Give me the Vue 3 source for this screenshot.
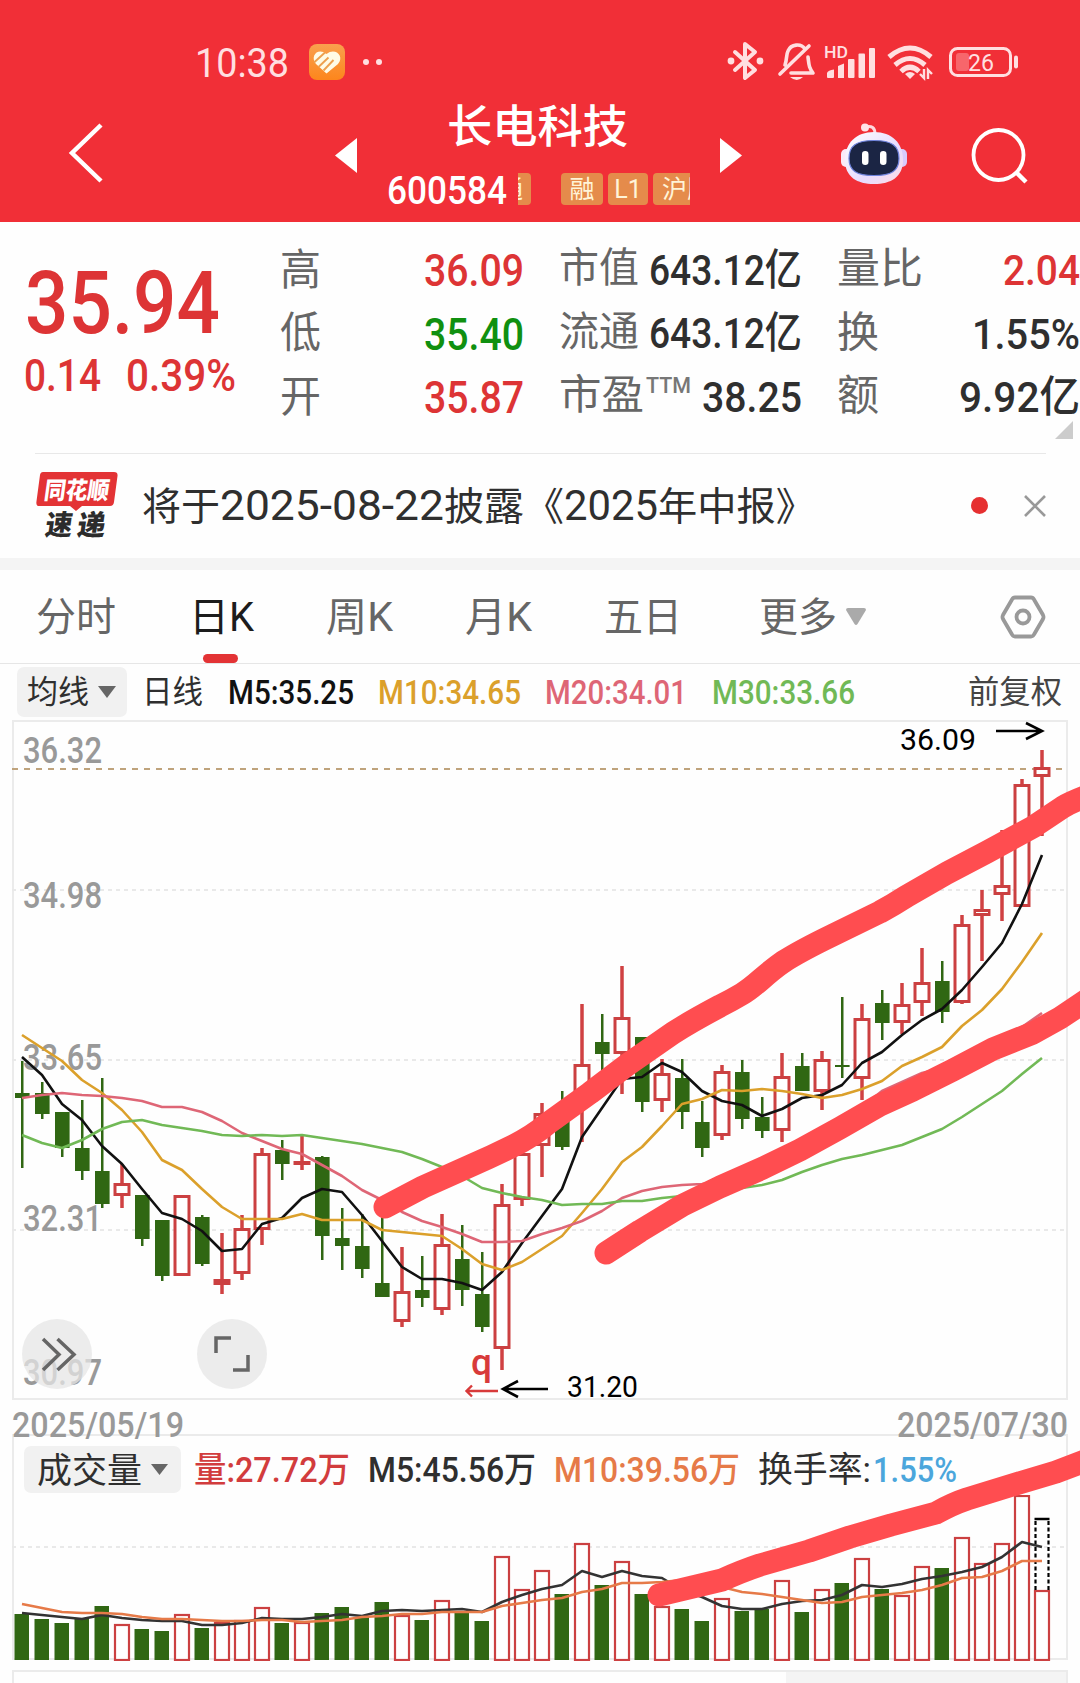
<script setup>
import { h } from 'vue'

// single line of text squeezed to a fixed width, bottom edge = baseline
const FitText = (props) => {
  const height = props.size * 0.88
  return h('svg', { class: 'fit', width: props.w, height }, [
    h('text', {
      x: 0,
      y: height,
      textLength: props.w,
      lengthAdjust: 'spacingAndGlyphs',
      'font-size': props.size,
      fill: 'currentColor'
    }, props.t)
  ])
}
FitText.props = ['t', 'w', 'size']

const ohlc = [
  { label: '高', value: '36.09', cls: 'up' },
  { label: '低', value: '35.40', cls: 'down' },
  { label: '开', value: '35.87', cls: 'up' }
]

const caps = [
  { label: '市值', lw: 80, value: '643.12亿', vw: 153 },
  { label: '流通', lw: 80, value: '643.12亿', vw: 153 },
  { label: '市盈', lw: 85, sup: 'TTM', value: '38.25', vw: 100 }
]

const ratios = [
  { label: '量比', lw: 86, value: '2.04', vw: 77, cls: 'up' },
  { label: '换', lw: 42, value: '1.55%', vw: 108, cls: '' },
  { label: '额', lw: 42, value: '9.92亿', vw: 121, cls: '' }
]

const notice = [
  { text: '将于', w: 78, size: 39 },
  { text: '2025-08-22', w: 224, size: 42 },
  { text: '披露《', w: 120, size: 39 },
  { text: '2025', w: 94, size: 42 },
  { text: '年中报》', w: 157, size: 39 }
]

const tabs = [
  { text: '分时', w: 80 },
  { text: '日K', w: 65, active: true },
  { text: '周K', w: 67 },
  { text: '月K', w: 67 },
  { text: '五日', w: 78 },
  { text: '更多', w: 78, more: true }
]

const mas = [
  { text: 'M5:35.25', w: 126, cls: 'm5' },
  { text: 'M10:34.65', w: 143, cls: 'm10' },
  { text: 'M20:34.01', w: 142, cls: 'm20' },
  { text: 'M30:33.66', w: 143, cls: 'm30' }
]

const axis = [
  { text: '36.32', y: 763 },
  { text: '34.98', y: 908 },
  { text: '33.65', y: 1070 },
  { text: '32.31', y: 1231 },
  { text: '30.97', y: 1385 }
]

// [up, high, low, body top, body bottom]
const candles = [
  [0, 1061, 1168, 1093, 1098], [0, 1082, 1119, 1093, 1114], [0, 1112, 1157, 1112, 1148],
  [0, 1100, 1180, 1148, 1171], [0, 1078, 1208, 1171, 1204], [1, 1164, 1208, 1183, 1196],
  [0, 1195, 1246, 1195, 1239], [0, 1220, 1281, 1220, 1276], [1, 1195, 1276, 1195, 1276],
  [0, 1215, 1266, 1217, 1264], [1, 1233, 1294, 1279, 1285], [1, 1215, 1280, 1228, 1274],
  [1, 1148, 1245, 1153, 1230], [0, 1140, 1180, 1150, 1164], [1, 1136, 1170, 1161, 1165],
  [0, 1156, 1260, 1157, 1236], [0, 1208, 1270, 1238, 1246], [0, 1214, 1278, 1246, 1269],
  [0, 1213, 1297, 1283, 1297], [1, 1247, 1327, 1291, 1322], [0, 1256, 1307, 1290, 1298],
  [1, 1214, 1315, 1244, 1310], [0, 1225, 1306, 1259, 1290], [0, 1252, 1332, 1294, 1327],
  [1, 1184, 1370, 1204, 1349], [1, 1147, 1206, 1153, 1200], [1, 1103, 1177, 1113, 1146],
  [0, 1091, 1150, 1115, 1147], [1, 1004, 1142, 1064, 1092], [0, 1014, 1070, 1042, 1054],
  [1, 966, 1094, 1017, 1054], [0, 1037, 1112, 1037, 1102], [1, 1059, 1112, 1073, 1101],
  [0, 1059, 1129, 1078, 1112], [0, 1101, 1157, 1122, 1148], [1, 1065, 1140, 1071, 1136],
  [0, 1060, 1129, 1072, 1119], [0, 1097, 1138, 1117, 1131], [1, 1053, 1142, 1076, 1131],
  [0, 1053, 1091, 1066, 1091], [1, 1051, 1110, 1059, 1092], [0, 997, 1078, 1065, 1067],
  [1, 1004, 1100, 1018, 1079], [0, 990, 1040, 1003, 1023], [1, 983, 1034, 1004, 1023],
  [1, 948, 1016, 982, 1003], [0, 961, 1023, 981, 1012], [1, 915, 1004, 924, 1003],
  [1, 890, 961, 909, 916], [1, 830, 921, 885, 895], [1, 779, 907, 784, 907],
  [1, 750, 836, 767, 777]
]

const lineM5 = [1057, 1075, 1104, 1120, 1146, 1164, 1189, 1213, 1219, 1231, 1251, 1249, 1224, 1218, 1198, 1189, 1192, 1215, 1241, 1267, 1279, 1279, 1283, 1290, 1272, 1243, 1216, 1189, 1137, 1108, 1079, 1077, 1063, 1072, 1091, 1101, 1105, 1116, 1109, 1098, 1095, 1085, 1063, 1052, 1035, 1020, 1009, 990, 967, 943, 904, 855]
const lineM10 = [1035, 1048, 1061, 1080, 1093, 1110, 1132, 1160, 1170, 1189, 1207, 1219, 1219, 1219, 1214, 1220, 1220, 1220, 1230, 1232, 1234, 1236, 1249, 1264, 1270, 1262, 1249, 1236, 1213, 1189, 1162, 1147, 1126, 1104, 1099, 1090, 1091, 1089, 1091, 1094, 1098, 1095, 1089, 1081, 1066, 1057, 1047, 1026, 1010, 989, 962, 933]
const lineM20 = [1098, 1095, 1093, 1095, 1096, 1098, 1101, 1107, 1107, 1112, 1121, 1133, 1141, 1149, 1154, 1165, 1176, 1190, 1200, 1212, 1221, 1227, 1234, 1242, 1242, 1241, 1234, 1228, 1221, 1211, 1198, 1191, 1187, 1185, 1184, 1181, 1176, 1166, 1154, 1142, 1131, 1120, 1107, 1091, 1082, 1073, 1068, 1058, 1048, 1038, 1027, 1013]
const lineM30 = [1135, 1143, 1148, 1140, 1129, 1122, 1120, 1125, 1128, 1131, 1135, 1136, 1135, 1136, 1135, 1138, 1141, 1144, 1148, 1152, 1159, 1167, 1176, 1188, 1193, 1197, 1200, 1205, 1204, 1204, 1201, 1201, 1198, 1196, 1195, 1191, 1188, 1185, 1180, 1172, 1165, 1159, 1155, 1150, 1145, 1137, 1129, 1117, 1104, 1091, 1074, 1058]

const volTops = [1614, 1619, 1623, 1618, 1606, 1624, 1629, 1631, 1614, 1628, 1622, 1620, 1607, 1623, 1622, 1613, 1607, 1617, 1602, 1615, 1620, 1600, 1613, 1621, 1556, 1589, 1570, 1594, 1543, 1585, 1561, 1594, 1606, 1609, 1621, 1598, 1611, 1609, 1580, 1612, 1589, 1583, 1558, 1589, 1595, 1566, 1568, 1537, 1563, 1543, 1495, 1590]
const volM5 = [1613, 1615, 1617, 1619, 1615, 1618, 1620, 1621, 1621, 1625, 1625, 1623, 1618, 1619, 1619, 1617, 1614, 1616, 1611, 1610, 1611, 1610, 1609, 1612, 1602, 1595, 1589, 1585, 1571, 1577, 1571, 1576, 1578, 1590, 1597, 1606, 1609, 1609, 1604, 1601, 1600, 1595, 1585, 1587, 1584, 1579, 1576, 1572, 1567, 1557, 1542, 1547]
const volM10 = [1604, 1608, 1612, 1613, 1613, 1614, 1617, 1619, 1619, 1620, 1621, 1621, 1620, 1620, 1622, 1621, 1620, 1617, 1616, 1614, 1614, 1612, 1612, 1612, 1606, 1603, 1600, 1598, 1592, 1589, 1583, 1583, 1582, 1580, 1582, 1587, 1592, 1594, 1597, 1600, 1603, 1602, 1597, 1595, 1593, 1590, 1585, 1578, 1577, 1571, 1561, 1561]

const cx = (i) => 22 + i * 20
const points = (list) => list.map((y, i) => `${cx(i)},${y}`).join(' ')
</script>

<template>
  <div class="page">
    <header class="top">
      <div class="status">
        <FitText class="clock" t="10:38" w="94" size="40" />
        <svg class="app-icon" width="36" height="36" viewBox="0 0 36 36">
          <defs>
            <linearGradient id="orange" x1="0" y1="0" x2="0" y2="1">
              <stop offset="0" stop-color="#f9a04e" />
              <stop offset="1" stop-color="#fd861c" />
            </linearGradient>
          </defs>
          <rect width="36" height="36" rx="8" fill="url(#orange)" />
          <path d="M17.500 29.500 L7 20 C0.500 12 9 3 17.500 10 C26 3 36 12 29 20z" fill="#fffbe6" />
          <path d="M5 18.500 L16 8.500 M9.500 23 L19.500 13.500 M14.500 26.500 L24.500 16" stroke="#eda04e" stroke-width="1.900" />
        </svg>
        <i class="dot"></i><i class="dot"></i>

        <svg class="status-icons" width="292" height="42" viewBox="0 0 292 42">
          <g fill="none" stroke="#ffdfe0" stroke-width="4" stroke-linejoin="round" stroke-linecap="round">
            <path d="M8 12 L28 30 L18 38 V4 L28 12 L8 30" />
            <path d="M58 25 C60 20 59 15 61 11 C64 4 74 3 78 9 M81 17 C82 25 82 28 86 33 H64 M53 34 L82 6" stroke-width="3.600" />
          </g>
          <circle cx="4" cy="21" r="3.400" fill="#ffdfe0" />
          <circle cx="33" cy="21" r="3.400" fill="#ffdfe0" />
          <path d="M63 37 H76 Q70 43 63 37" fill="#ffdfe0" />
          <text x="97" y="18" font-size="16.500" font-weight="500" fill="#ffdfe0" textLength="24" lengthAdjust="spacingAndGlyphs">HD</text>
          <g fill="#ffdfe0">
            <path d="M100 33 Q101 30 107 29.500 V37 Q107 38 106 38 H101 Q100 38 100 37z" />
            <path d="M111 26 L117 23.500 V38 H111z" />
            <rect x="121" y="19" width="6.500" height="19" rx="1" />
            <rect x="131.500" y="13.500" width="6.500" height="24.500" rx="1" />
            <rect x="142" y="8" width="6" height="30" rx="1" />
          </g>
          <g fill="none" stroke="#ffdfe0" stroke-width="5">
            <path d="M162 17 Q183 -1 204 17" />
            <path d="M168 25 Q183 12 198 25" />
            <path d="M174 31.500 Q183 23 192 31.500" />
          </g>
          <path d="M178 34 Q183 30 188 34 L183 39z" fill="#ffdfe0" />
          <path d="M197 29 V38 L193 34 M201 39 V30 L205 34" fill="none" stroke="#ffdfe0" stroke-width="2.400" />
          <rect x="223.500" y="8.500" width="60" height="27" rx="7" fill="none" stroke="#ffdfe0" stroke-width="3" />
          <rect x="229" y="13" width="13" height="18" rx="3" fill="#f7666b" />
          <text x="241" y="31" font-size="24" fill="#ffdfe0" textLength="26" lengthAdjust="spacingAndGlyphs">26</text>
          <path d="M289 17.500 V26.500" stroke="#ffdfe0" stroke-width="4" stroke-linecap="round" />
        </svg>
      </div>

      <div class="nav">
        <svg class="back" width="36" height="62" viewBox="0 0 36 62">
          <path d="M33 3 L4 31 L33 59" fill="none" stroke="#fff" stroke-width="4.500" />
        </svg>
        <svg class="prev" width="22" height="35"><path d="M22 0 V35 L0 17.500z" fill="#fff" /></svg>
        <div class="stock">
          <FitText class="name-cn" t="长电科技" w="181" size="45" />
          <div class="codes">
            <FitText class="code" t="600584" w="120" size="39" />
            <span class="tag cut-left">通</span>
            <span class="tag rong">融</span>
            <span class="tag l1">L1</span>
            <span class="tag cut-right">沪股</span>
          </div>
        </div>
        <svg class="next" width="22" height="35"><path d="M0 0 V35 L22 17.500z" fill="#fff" /></svg>
        <svg class="robot" width="68" height="64" viewBox="0 0 68 64">
          <defs>
            <linearGradient id="shell" x1="0" y1="0" x2="1" y2="1">
              <stop offset="0" stop-color="#fff" />
              <stop offset="0.600" stop-color="#e6dcff" />
              <stop offset="1" stop-color="#ffdce4" />
            </linearGradient>
          </defs>
          <path d="M24 4 C31 2 34 5 34 11" fill="none" stroke="#ffd9de" stroke-width="3" />
          <circle cx="24" cy="4.500" r="4" fill="#ffe4e8" />
          <rect x="0" y="26" width="12" height="18" rx="5" fill="#fbe9f8" />
          <rect x="54" y="26" width="12" height="18" rx="5" fill="#d9cbfc" />
          <path d="M33 9 C51 9 62 20 62 37 C62 54 50 61 33 61 C16 61 4 54 4 37 C4 20 15 9 33 9z" fill="url(#shell)" />
          <path d="M33 17.500 C51 17.500 58 23 58 35.500 C58 48 50 52.500 33 52.500 C16 52.500 8 48 8 35.500 C8 23 15 17.500 33 17.500z" fill="#1b2544" stroke="#6e83dc" stroke-width="1.200" />
          <rect x="21" y="28" width="6.500" height="14" rx="3.200" fill="#fff" />
          <rect x="39" y="28" width="6.500" height="14" rx="3.200" fill="#fff" />
        </svg>
        <svg class="search" width="58" height="58" viewBox="0 0 58 58">
          <circle cx="27.500" cy="28" r="25" fill="none" stroke="#fff" stroke-width="3.800" />
          <path d="M45 45 L55 55" stroke="#fff" stroke-width="4.500" />
        </svg>
      </div>
    </header>

    <section class="quote">
      <div class="price up">
        <FitText class="last" t="35.94" w="195" size="88" />
        <div class="change">
          <FitText t="0.14" w="77" size="43.500" />
          <FitText t="0.39%" w="110" size="43.500" />
        </div>
      </div>
      <div class="col ohlc">
        <div v-for="o in ohlc" :key="o.label" class="pair">
          <FitText class="label" :t="o.label" w="41" size="43" />
          <FitText :class="['num', o.cls]" :t="o.value" w="100" size="43.500" />
        </div>
      </div>
      <div class="col caps">
        <div v-for="c in caps" :key="c.label" class="pair">
          <div class="name">
            <FitText class="label" :t="c.label" :w="c.lw" size="41" />
            <FitText v-if="c.sup" class="sup" :t="c.sup" w="45" size="22" />
          </div>
          <FitText class="num" :t="c.value" :w="c.vw" size="43" />
        </div>
      </div>
      <div class="col ratios">
        <div v-for="r in ratios" :key="r.label" class="pair">
          <FitText class="label" :t="r.label" :w="r.lw" size="42" />
          <FitText :class="['num', r.cls]" :t="r.value" :w="r.vw" size="43" />
        </div>
      </div>
      <i class="corner"></i>
    </section>

    <section class="notice">
      <svg class="logo" width="82" height="68" viewBox="0 0 82 68">
        <path d="M7 0 H78 Q82 0 81.500 4 L78 30 Q77.500 34 74 34 H46 L40 39 L34 34 H3 Q0 34 0.400 30 L4 3 Q4.500 0 7 0z" fill="#e33335" />
        <g transform="skewX(-8)" class="logo-text">
          <text x="11" y="27" font-size="24" fill="#fff" textLength="65" lengthAdjust="spacingAndGlyphs">同花顺</text>
          <text x="17" y="63" font-size="28" fill="#2c2c2c" textLength="27" lengthAdjust="spacingAndGlyphs">速</text>
          <text x="49" y="63" font-size="28" fill="#2c2c2c" textLength="28" lengthAdjust="spacingAndGlyphs">递</text>
        </g>
      </svg>
      <div class="notice-text">
        <FitText v-for="n in notice" :key="n.text" :t="n.text" :w="n.w" :size="n.size" />
      </div>
      <i class="red-dot"></i>
      <svg class="close" width="22" height="22"><path d="M1 1 L21 21 M21 1 L1 21" stroke="#999" stroke-width="2.600" /></svg>
    </section>

    <nav class="tabs">
      <div v-for="t in tabs" :key="t.text" :class="['tab', { active: t.active }]">
        <FitText :t="t.text" :w="t.w" size="40" />
        <svg v-if="t.more" class="more" width="20" height="18"><path d="M0 2 Q0 0 2 0 H18 Q20 0 20 2 L11.500 16 Q10 18 8.500 16z" fill="#aaa" /></svg>
      </div>
      <svg class="gear" width="46" height="44" viewBox="0 0 46 44">
        <path d="M15 2.500 H31 Q33 2.500 34 4.500 L43 20 Q44 22 43 24 L34 39.500 Q33 41.500 31 41.500 H15 Q13 41.500 12 39.500 L3 24 Q2 22 3 20 L12 4.500 Q13 2.500 15 2.500z" fill="none" stroke="#999" stroke-width="3.800" />
        <circle cx="23" cy="22" r="6.500" fill="none" stroke="#999" stroke-width="3.800" />
      </svg>
    </nav>

    <div class="legend">
      <span class="picker">
        <FitText t="均线" w="62" size="32" />
        <svg width="18" height="12"><path d="M0 0 H18 L9 12z" fill="#666" /></svg>
      </span>
      <FitText class="period" t="日线" w="61" size="32" />
      <FitText v-for="m in mas" :key="m.text" :class="['ma', m.cls]" :t="m.text" :w="m.w" size="33" />
      <FitText class="adjust" t="前复权" w="94" size="32" />
    </div>

    <svg class="kline" width="1080" height="680" viewBox="0 720 1080 680">
      <rect x="13" y="721" width="1054" height="678" fill="none" stroke="#ebebeb" stroke-width="2" />
      <path d="M12 890 H1066 M12 1060 H1066 M12 1230 H1066" stroke="#e9e9e9" stroke-width="2" stroke-dasharray="4 4" />
      <path d="M12 769 H1066" stroke="#bfa37c" stroke-width="2" stroke-dasharray="6 6" />
      <g class="axis">
        <text v-for="a in axis" :key="a.text" x="23" :y="a.y" textLength="79" lengthAdjust="spacingAndGlyphs">{{ a.text }}</text>
      </g>
      <template v-for="(c, i) in candles" :key="i">
        <g v-if="c[0]" class="rise">
          <path :d="`M${cx(i)} ${c[1]} V${c[3]} M${cx(i)} ${c[4]} V${c[2]}`" />
          <rect :x="cx(i) - 7" :y="c[3] + 1.5" width="14" :height="Math.max(c[4] - c[3] - 3, 1)" />
        </g>
        <g v-else class="fall">
          <rect :x="cx(i) - 1" :y="c[1]" width="2.500" :height="c[2] - c[1]" />
          <rect :x="cx(i) - 7" :y="c[3]" width="14.600" :height="c[4] - c[3]" />
        </g>
      </template>
      <g class="lines">
        <polyline :points="points(lineM5)" stroke="#111" />
        <polyline :points="points(lineM10)" stroke="#dba02b" />
        <polyline :points="points(lineM20)" stroke="#de6676" />
        <polyline :points="points(lineM30)" stroke="#71b956" />
      </g>
      <g class="marks">
        <text x="900" y="750" textLength="76" lengthAdjust="spacingAndGlyphs">36.09</text>
        <path d="M996 731 H1041 M1026 723 L1042 731 L1026 739" />
        <text x="567" y="1397" textLength="71" lengthAdjust="spacingAndGlyphs">31.20</text>
        <path d="M548 1389 H504 M518 1381 L503 1389 L518 1397" />
        <text class="q" x="471" y="1375">q</text>
        <path class="q-arrow" d="M498 1391 H467 M472 1385.500 L466.500 1391 L472 1396.500" />
      </g>
      <circle cx="57" cy="1354" r="35" fill="#e6e6e6" fill-opacity="0.750" />
      <circle cx="232" cy="1354" r="35" fill="#e6e6e6" fill-opacity="0.750" />
      <path d="M43 1339 L59 1354.500 L43 1370 M57.500 1339 L74 1354.500 L57.500 1370 M231 1338 H216 V1353 M248 1355 V1370 H233" fill="none" stroke="#666" stroke-width="3.500" />
    </svg>

    <div class="dates">
      <FitText t="2025/05/19" w="172" size="35.500" />
      <FitText t="2025/07/30" w="171" size="35.500" />
    </div>

    <section class="volume">
      <div class="vol-head">
        <span class="picker vol-picker">
          <FitText t="成交量" w="105" size="35" />
          <svg width="17" height="11"><path d="M0 0 H17 L8.500 11z" fill="#666" /></svg>
        </span>
        <FitText class="ma v1" t="量:27.72万" w="156" size="35" />
        <FitText class="ma v2" t="M5:45.56万" w="168" size="35" />
        <FitText class="ma v3" t="M10:39.56万" w="186" size="35" />
        <FitText class="ma v4" t="换手率:" w="113" size="35" />
        <FitText class="ma v5" t="1.55%" w="84" size="35" />
      </div>
      <svg class="vol-bars" width="1080" height="166" viewBox="0 1495 1080 166">
        <path d="M12 1547 H1066" stroke="#e9e9e9" stroke-width="2" stroke-dasharray="4 4" />
        <template v-for="(y, i) in volTops" :key="i">
          <rect v-if="candles[i][0]" class="vol-up" :x="cx(i) - 7" :y="y + 1" width="14" :height="1659 - y" />
          <rect v-else class="vol-down" :x="cx(i) - 7.5" :y="y" width="14.500" :height="1660 - y" />
        </template>
        <path d="M1035.500 1590 V1518.500 M1048.500 1590 V1518.500" stroke="#000" stroke-width="2.200" stroke-dasharray="4 2.500" />
        <path d="M1034.500 1519 H1049.500" stroke="#000" stroke-width="2.500" />
        <g class="lines">
          <polyline :points="points(volM5)" stroke="#333" />
          <polyline :points="points(volM10)" stroke="#e67a48" />
        </g>
      </svg>
    </section>

    <section class="next-panel"><i></i></section>

    <!-- hand drawn trend lines over both charts -->
    <svg class="strokes" width="1080" height="1683">
      <path d="M385 1207 L423 1187 L470 1166 Q493 1156 513 1146 T547 1124 L590 1093 L627 1065 L673 1033 Q690 1022 720 1006 Q732 1000 742 994 C756 986 764 975 783 962 Q800 951 833 935 L880 912 Q893 905 907 896 L947 873 L987 852 L1033 827 L1063 807 Q1071 802 1090 795" />
      <path d="M606 1253 L640 1231 L683 1205 L720 1187 L763 1168 L800 1150 L840 1128 L880 1105 L913 1090 L953 1070 L993 1049 L1033 1033 L1060 1018 L1090 998" />
      <path d="M659 1595 L722 1580 Q742 1571 760 1565 L809 1551 L850 1537 L891 1525 L936 1513 Q952 1504 967 1499 L1019 1483 L1056 1472 L1090 1459" />
    </svg>
  </div>
</template>

<style>
.fit {
  display: block;
  flex: none;
  overflow: visible;
}
</style>

<style scoped>
.page {
  position: relative;
  z-index: 0;
  width: 1080px;
  height: 1683px;
  overflow: hidden;
  background: #fefefe;
  color: #2f2f2f;
  font-family: Roboto, "Noto Sans CJK SC", sans-serif;
}

svg {
  flex: none;
}

.up {
  color: #dd3435;
}

.down {
  color: #109010;
}

.top {
  height: 222px;
  background: #f12f37;
  color: #fff;
}

.status {
  display: flex;
  height: 82px;
  padding: 0 61px 0 195px;
  color: #ffdfe0;
}

.clock {
  margin-top: 42px;
}

.app-icon {
  margin: 44px 18px 0 20px;
}

.dot {
  width: 6px;
  height: 6px;
  margin: 59px 6.5px 0 0;
  border-radius: 50%;
  background: #ffdfe0;
}

.status-icons {
  margin: 40px 0 0 auto;
}

.nav {
  display: flex;
  height: 140px;
}

.back {
  margin: 40px 0 0 68px;
}

.prev {
  margin: 56px 0 0 231px;
}

.stock {
  width: 303px;
  margin: 21px 0 0 31px;
}

.name-cn {
  margin-left: 59px;
  font-weight: 500;
}

.codes {
  display: flex;
  height: 32px;
  margin-top: 30px;
}

.code {
  margin: -3px 11px 0 -1px;
  font-weight: 500;
}

.tag {
  box-sizing: border-box;
  height: 32px;
  overflow: hidden;
  border-radius: 4px;
  background: #e58b4b;
  color: #fff4d8;
  font-size: 25px;
  line-height: 33px;
  text-align: center;
  white-space: nowrap;
}

.cut-left {
  display: flex;
  justify-content: flex-end;
  width: 13px;
  margin-right: 30px;
  padding-right: 8px;
  border-radius: 0 4px 4px 0;
}

.rong {
  width: 42px;
  margin-right: 5px;
}

.l1 {
  width: 40px;
  margin-right: 5px;
}

.cut-right {
  width: 37px;
  padding-left: 9px;
  border-radius: 4px 0 0 4px;
  text-align: left;
}

.next {
  margin: 56px 0 0 29px;
}

.robot {
  margin: 41px 0 0 99px;
}

.search {
  margin: 45px 0 0 62px;
}

.quote {
  position: relative;
  display: flex;
  height: 231px;
  font-weight: 500;
}

.price {
  width: 280px;
}

.last {
  margin: 34px 0 0 25px;
}

.change {
  display: flex;
  gap: 25px;
  margin: 20px 0 0 24px;
}

.col {
  display: flex;
  flex-direction: column;
  padding-top: 16px;
}

.pair {
  display: flex;
  align-items: flex-end;
  justify-content: space-between;
  height: 63.500px;
  margin-top: -15px;
  margin-bottom: 15px;
}

.label {
  color: #666;
  font-weight: 400;
}

.pair .label {
  margin-bottom: 2px;
}

.ohlc {
  width: 244px;
}

.caps {
  width: 243px;
  margin-left: 35px;
  padding-top: 14px;
}

.ratios {
  width: 243px;
  margin-left: 35px;
  padding-top: 14.500px;
}

.name {
  display: flex;
}

.sup {
  margin: 1px 0 0 2px;
  color: #777;
}

.corner {
  position: absolute;
  right: 7px;
  bottom: 14px;
  border-bottom: 18px solid #ccc;
  border-left: 18px solid transparent;
}

.notice {
  display: flex;
  box-sizing: border-box;
  height: 105px;
  margin: 0 34px 0 35px;
  border-top: 1px solid #e8e8e8;
}

.logo {
  margin: 18px 0 0 1px;
}

.logo-text {
  font-weight: 900;
}

.notice-text {
  display: flex;
  align-items: flex-end;
  height: 66px;
  margin-left: 24px;
}

.red-dot {
  width: 17px;
  height: 17px;
  margin: 43px 0 0 auto;
  border-radius: 50%;
  background: #e63031;
}

.close {
  margin: 41px 0 0 36px;
}

.tabs {
  display: flex;
  box-sizing: border-box;
  height: 106px;
  padding-left: 36px;
  border-top: 12px solid #f4f4f4;
  border-bottom: 1.500px solid #e6e6e6;
  color: #666;
}

.tab {
  display: flex;
  height: 93px;
  padding-top: 26px;
  box-sizing: border-box;
}

.tab:nth-child(1) { width: 153px; }
.tab:nth-child(2) { width: 137px; }
.tab:nth-child(3) { width: 139px; }
.tab:nth-child(4) { width: 139px; }
.tab:nth-child(5) { width: 155px; }

.tab.active {
  flex-direction: column;
  color: #1c1c1c;
}

.active::after {
  width: 35px;
  height: 9px;
  margin: auto 0 0 14px;
  border-radius: 5px;
  background: #e33335;
  content: "";
}

.more {
  margin: 12px 0 0 9px;
}

.gear {
  margin: 25px 34px 0 auto;
}

.legend {
  display: flex;
  box-sizing: border-box;
  height: 56px;
  padding: 3px 18px 0 17px;
}

.picker {
  display: flex;
  align-items: center;
  box-sizing: border-box;
  width: 110px;
  height: 50px;
  padding-left: 10px;
  border-radius: 7px;
  background: #f1f1f1;
}

.picker .fit {
  margin: -5px 9px 0 0;
}

.period {
  margin: 8px 25px 0 15px;
}

.ma {
  margin-top: 8px;
  font-weight: 500;
}

.m5 { margin-right: 24px; color: #111; }
.m10 { margin-right: 24px; color: #dba02b; }
.m20 { margin-right: 25px; color: #de6676; }
.m30 { color: #71b956; }

.adjust {
  margin: 8px 0 0 auto;
  color: #444;
}

.kline,
.vol-bars {
  display: block;
}

.axis {
  fill: #999;
  font-size: 36px;
  font-weight: 500;
}

.rise rect,
.vol-up {
  fill: #fff;
  stroke: #cb4041;
  stroke-width: 3px;
}

.vol-up {
  stroke-width: 2.200px;
}

.rise path {
  fill: none;
  stroke: #d04142;
  stroke-width: 3.500px;
}

.fall,
.vol-down {
  fill: #306713;
}

.lines {
  fill: none;
  stroke-width: 2.600px;
  stroke-linejoin: round;
}

.marks {
  fill: #000;
  font-size: 30px;
}

.marks path {
  fill: none;
  stroke: #000;
  stroke-width: 2.600px;
}

.marks .q {
  fill: #d83a3a;
  font-size: 37px;
  font-weight: 500;
}

.marks .q-arrow {
  stroke: #d83a3a;
  stroke-width: 2.400px;
}

.dates {
  display: flex;
  justify-content: space-between;
  height: 34px;
  padding: 6px 12px 0;
  box-sizing: border-box;
  color: #999;
  font-weight: 500;
}

.volume {
  position: relative;
  height: 226px;
}

/* frame around header and bars */
.volume::before {
  position: absolute;
  inset: 0 12px 0 12px;
  z-index: -1;
  border: 2px solid #ebebeb;
  content: "";
}

.vol-head {
  display: flex;
  height: 61px;
  padding: 12px 0 0 24px;
  box-sizing: border-box;
}

.vol-picker {
  width: 157px;
  height: 47px;
  padding-left: 13px;
}

.vol-head .ma {
  margin-top: 5px;
}

.v1 { margin-left: 13px; color: #d23c3d; }
.v2 { margin-left: 18px; }
.v3 { margin-left: 18px; color: #e67a48; }
.vol-head .v4 { margin-left: 18px; font-weight: 400; }
.v5 { margin-left: 2px; color: #4ba6dc; }

.next-panel {
  display: flex;
  justify-content: flex-end;
  height: 30px;
  margin: 10px 12px 0;
  border: 2px solid #ebebeb;
}

.next-panel i {
  width: 280px;
  background: #f4f4f4;
}

.strokes {
  position: absolute;
  top: 0;
  left: 0;
  fill: none;
  stroke: #ff4d50;
  stroke-width: 23px;
  stroke-linecap: round;
  stroke-linejoin: round;
}
</style>
